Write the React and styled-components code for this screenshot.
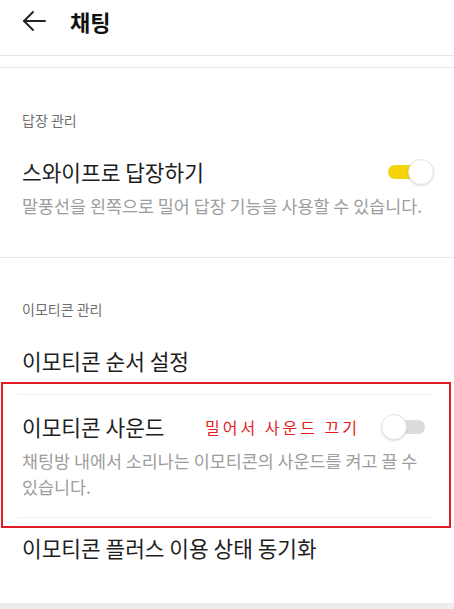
import React from 'react';
import styled, { createGlobalStyle } from 'styled-components';

const GlobalStyle = createGlobalStyle`
    html, body {
        margin: 0;
        padding: 0;
        background: #ffffff;
    }
    body {
        font-family: "Noto Sans CJK KR", "Noto Sans", sans-serif;
        color: #1e1e1e;
    }
`;

const Page = styled.div`
    width: 454px;
    height: 609px;
    overflow: hidden;
    display: flex;
    flex-direction: column;
`;

const Header = styled.header`
    height: 56px;
    display: flex;
    align-items: flex-start;
    padding: 7px 0 0 22px;
    box-sizing: border-box;
    border-bottom: 1px solid #e6e6e6;
`;

const BackButton = styled.div`
    width: 26px;
    height: 28px;
    display: flex;
    align-items: center;
`;

const Title = styled.h1`
    margin: 0 0 0 22px;
    font-size: 22px;
    line-height: 28px;
    font-weight: 700;
    color: #111;
`;

const Spacer = styled.div`
    height: 11px;
    border-bottom: 1px solid #e6e6e6;
`;

const Section = styled.section`
    padding: 0 20px 0 22px;
    border-bottom: ${(p) => (p.$last ? 'none' : '1px solid #e6e6e6')};
    padding-bottom: ${(p) => p.$bottom || 0}px;
`;

const SectionLabel = styled.div`
    margin-top: ${(p) => p.$top}px;
    font-size: 14px;
    line-height: 20px;
    color: #6f6f6f;
`;

const Row = styled.div`
    margin-top: ${(p) => p.$top}px;
    display: flex;
    align-items: center;
    justify-content: space-between;
    height: 28px;
`;

const ItemTitle = styled.div`
    font-size: 21.4px;
    line-height: 28px;
    color: #1e1e1e;
    margin-top: ${(p) => p.$top || 0}px;
`;

const Desc = styled.div`
    margin-top: 7px;
    font-size: 17.4px;
    line-height: 26px;
    color: #9d9d9d;
`;

const Highlight = styled.div`
    margin: 7px 3px 0 1px;
    border: 2px solid #e31b23;
    padding: 10px 22px 0 19px;
`;

const InnerDivider = styled.div`
    height: 1px;
    background: #efefef;
    margin: ${(p) => p.$top || 0}px -7px ${(p) => p.$bottom || 0}px -4px;
`;

const Note = styled.span`
    font-size: 16px;
    letter-spacing: 3px;
    color: #e31b23;
    margin-left: auto;
    margin-right: 21px;
`;

const SwitchBox = styled.div`
    position: relative;
    width: 46px;
    height: 26px;
    flex-shrink: 0;
`;

const Track = styled.div`
    position: absolute;
    left: ${(p) => (p.$on ? 0 : 2)}px;
    right: 2px;
    top: 6px;
    height: 14px;
    border-radius: 7px;
    background: ${(p) => (p.$on ? '#f5d40a' : '#dcdcdc')};
`;

const Thumb = styled.div`
    position: absolute;
    top: 0;
    ${(p) => (p.$on ? 'right: 0;' : 'left: 0;')}
    width: 26px;
    height: 26px;
    box-sizing: border-box;
    border-radius: 50%;
    background: #fff;
    border: 1px solid #e4e4e4;
    box-shadow: 0 1px 2px rgba(0, 0, 0, 0.12);
`;

const BottomBar = styled.div`
    margin-top: 41px;
    flex: 1;
    background: #ededed;
`;

function Switch({ on }) {
    return (
        <SwitchBox>
            <Track $on={on} />
            <Thumb $on={on} />
        </SwitchBox>
    );
}

export default function App() {
    return (
        <Page>
            <GlobalStyle />
            <Header>
                <BackButton>
                    <svg width="24" height="24" viewBox="0 0 24 24" fill="none" stroke="#222" strokeWidth="1.9" strokeLinecap="round" strokeLinejoin="round">
                        <path d="M2 12h21" />
                        <path d="M11 3l-9 9 9 9" />
                    </svg>
                </BackButton>
                <Title>채팅</Title>
            </Header>
            <Spacer />
            <Section $bottom={38}>
                <SectionLabel $top={42}>답장 관리</SectionLabel>
                <Row $top={28}>
                    <ItemTitle>스와이프로 답장하기</ItemTitle>
                    <Switch on />
                </Row>
                <Desc>말풍선을 왼쪽으로 밀어 답장 기능을 사용할 수 있습니다.</Desc>
            </Section>
            <Section $last>
                <SectionLabel $top={41}>이모티콘 관리</SectionLabel>
                <ItemTitle $top={28}>이모티콘 순서 설정</ItemTitle>
            </Section>
            <Highlight>
                <InnerDivider />
                <Row $top={18}>
                    <ItemTitle>이모티콘 사운드</ItemTitle>
                    <Note>밀어서 사운드 끄기</Note>
                    <Switch />
                </Row>
                <Desc>채팅방 내에서 소리나는 이모티콘의 사운드를 켜고 끌 수 있습니다.</Desc>
                <InnerDivider $top={17} $bottom={8} />
            </Highlight>
            <Section $last>
                <ItemTitle $top={6}>이모티콘 플러스 이용 상태 동기화</ItemTitle>
            </Section>
            <BottomBar />
        </Page>
    );
}
